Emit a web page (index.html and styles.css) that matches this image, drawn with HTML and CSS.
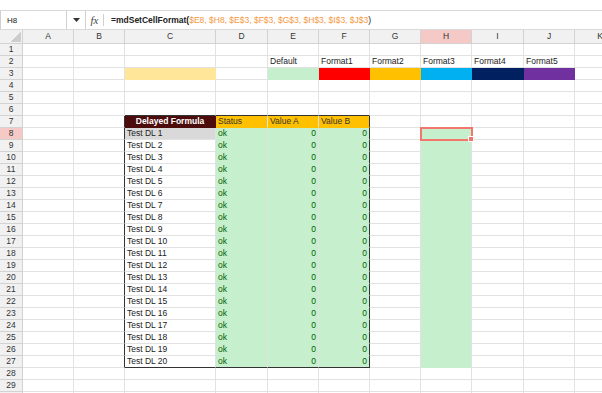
FILE: index.html
```html
<!DOCTYPE html>
<html lang="en">
<head>
  <meta charset="UTF-8" />
  <title>Sheet</title>
  <link rel="stylesheet" href="styles.css">
</head>
<body>
  <div id="formula-bar">
    <div id="name-box">H8</div>
    <div id="name-drop">
      <svg width="7" height="4" viewBox="0 0 7 4"><path d="M0 0h7L3.5 4z" fill="#333"/></svg>
    </div>
    <div id="fx">fx</div>
    <div id="fx-sep"></div>
    <div id="formula"><b>=mdSetCellFormat(</b><span class="ref">$E8, $H8, $E$3, $F$3, $G$3, $H$3, $I$3, $J$3</span>)</div>
  </div>
  <div id="sheet"></div>

  <script>
    const cols = ["A", "B", "C", "D", "E", "F", "G", "H", "I", "J", "K"];
    const sheet = document.getElementById("sheet");

    // cell text by address
    const cells = {
      E2: "Default", F2: "Format1", G2: "Format2", H2: "Format3", I2: "Format4", J2: "Format5",
      C7: "Delayed Formula", D7: "Status", E7: "Value A", F7: "Value B"
    };

    // cell formats by address
    const classes = {
      C3: "sw yellow", E3: "sw green", F3: "sw red", G3: "sw amber",
      H3: "sw blue", I3: "sw navy", J3: "sw purple",
      C7: "title", D7: "amber", E7: "amber", F7: "amber"
    };

    for (let i = 1; i <= 20; i++) {
      const r = i + 7;
      cells["C" + r] = "Test DL " + i;
      cells["D" + r] = "ok";
      cells["E" + r] = "0";
      cells["F" + r] = "0";
      classes["D" + r] = "good";
      classes["E" + r] = "good num";
      classes["F" + r] = "good num";
      classes["H" + r] = "good";
    }
    classes.C8 = "picked";

    function addClass(addr, cls) {
      classes[addr] = classes[addr] ? classes[addr] + " " + cls : cls;
    }

    // outline of the table C7:F27
    ["C", "D", "E", "F"].forEach(c => {
      addClass(c + 6, "edge-b");
      addClass(c + 27, "edge-b");
    });
    for (let r = 7; r <= 27; r++) {
      addClass("B" + r, "edge-r");
      addClass("F" + r, "edge-r");
    }
    addClass("H8", "selected");

    function add(cls, text) {
      const div = document.createElement("div");
      div.className = cls;
      if (text !== undefined) div.textContent = text;
      sheet.appendChild(div);
    }

    add("cell head corner");
    cols.forEach(c => add("cell head col-head" + (c === "H" ? " active" : ""), c));

    for (let r = 1; r <= 30; r++) {
      add("cell head row-head" + (r === 8 ? " active" : ""), r);
      cols.forEach(c => {
        const addr = c + r;
        add("cell " + (classes[addr] || ""), cells[addr]);
      });
    }
  </script>
</body>
</html>
```

FILE: styles.css
```css
html, body {
  margin: 0;
  padding: 0;
  height: 100%;
  background: #fff;
  font-family: "Liberation Sans", Arial, sans-serif;
  font-size: 8.5px;
  color: #222;
  overflow: hidden;
}

#formula-bar {
  display: flex;
  height: 20px;
  margin-top: 10px;
  border-top: 1px solid #d9d9d9;
  border-bottom: 1px solid #d9d9d9;
  box-sizing: border-box;
}

#name-box {
  width: 67px;
  box-sizing: border-box;
  border-left: 1px solid #d0d0d0;
  border-right: 1px solid #d0d0d0;
  padding-left: 6px;
  display: flex;
  align-items: center;
  font-size: 8px;
}

#name-drop {
  width: 19px;
  box-sizing: border-box;
  border-right: 1px solid #d0d0d0;
  display: flex;
  align-items: center;
  justify-content: center;
}

#fx {
  width: 17px;
  display: flex;
  align-items: center;
  justify-content: center;
  font-family: "Liberation Serif", serif;
  font-style: italic;
  font-size: 11px;
  color: #444;
}

#fx-sep {
  width: 1px;
  margin: 3px 0;
  background: #d0d0d0;
}

#formula {
  flex-grow: 1;
  display: flex;
  align-items: center;
  padding-left: 7px;
  white-space: pre;
  color: #222;
}

#formula b {
  font-weight: bold;
}

#formula .ref {
  color: #f5983e;
}

#sheet {
  display: grid;
  grid-template-columns: 23px 51px 51px 91px 52px 51px 51px 51px 51px 52px 51px 51px;
  grid-template-rows: 14px;
  grid-auto-rows: 12px;
}

.cell {
  box-sizing: border-box;
  border-right: 1px solid #e2e2e2;
  border-bottom: 1px solid #e2e2e2;
  padding: 0 2px;
  line-height: 11px;
  white-space: nowrap;
  overflow: hidden;
}

.head {
  background: #f1f1f1;
  border-color: #d2d2d2;
  text-align: center;
  color: #333;
  padding: 0;
}

.col-head {
  line-height: 13px;
}

.corner {
  background: linear-gradient(135deg, transparent 50%, #cdcdcd 50%) no-repeat right 1px bottom 1px / 10px 10px, #f1f1f1;
}

.active {
  background: #f5c9c5;
}

.sw {
  border-color: transparent;
}

.yellow { background: #ffe699; }
.green { background: #c6efce; }
.red { background: #ff0000; }
.amber { background: #ffc000; border-bottom-color: transparent; color: #333; }
.blue { background: #00b0f0; }
.navy { background: #002060; }
.purple { background: #7030a0; }

.title {
  background: #4d0c0c;
  border-color: transparent;
  color: #fff;
  font-weight: bold;
  text-align: center;
}

.good {
  background: #c6efce;
  color: #006100;
  border-bottom-color: transparent;
}

.num {
  text-align: right;
}

.picked {
  background: #d9d9d9;
}

.edge-r {
  border-right-color: #333;
}

.edge-b {
  border-bottom-color: #333;
}

.selected {
  position: relative;
  z-index: 1;
  overflow: visible;
  outline: 2px solid #f2766b;
  outline-offset: -1px;
}

.selected::after {
  content: "";
  position: absolute;
  right: -3px;
  bottom: -3px;
  width: 4px;
  height: 4px;
  background: #f2766b;
  border: 1px solid #fff;
}
```
